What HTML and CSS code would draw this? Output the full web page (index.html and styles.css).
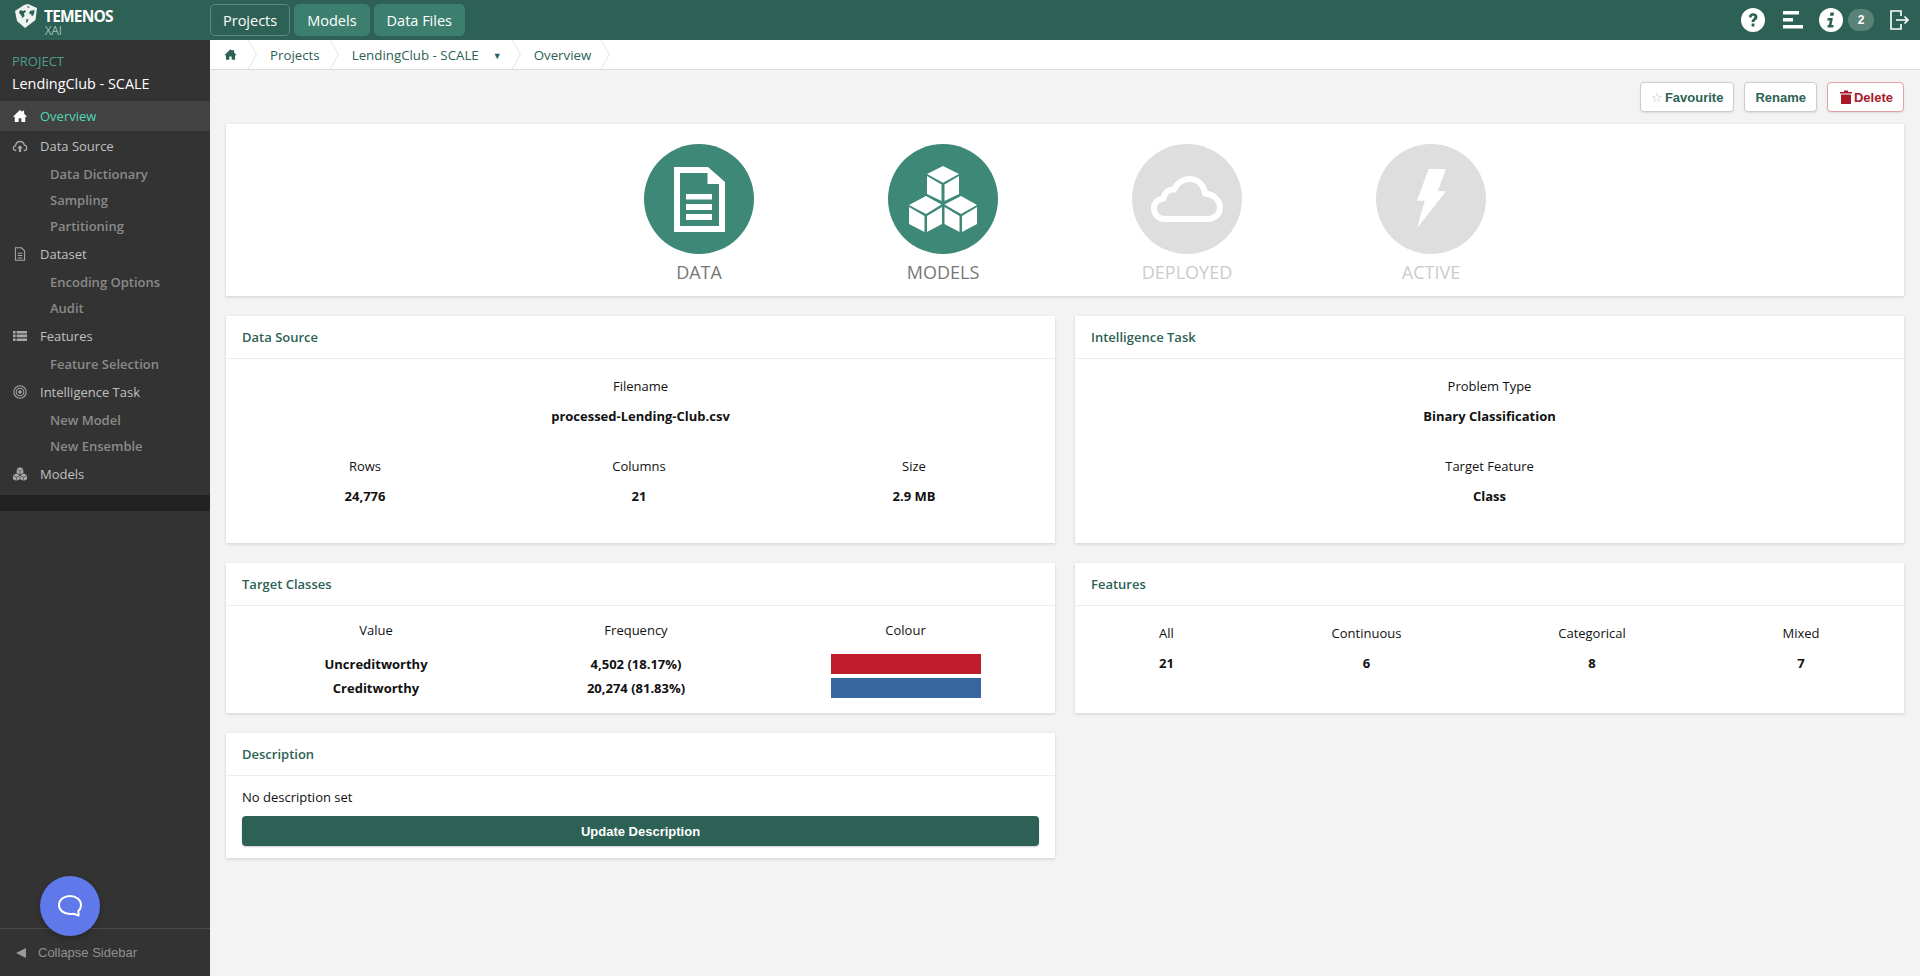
FILE: index.html
```html
<!DOCTYPE html>
<html lang="en">
<head>
<meta charset="utf-8">
<title>Temenos XAI - Overview</title>
<link rel="stylesheet" href="styles.css">
</head>
<body>
<svg class="defs" width="0" height="0" aria-hidden="true">
  <defs>
    <path id="home" d="M10 2 L13 4.800 V3 H15.500 V7 L19.500 11 H17 V18 H11.800 V13 H8.200 V18 H3 V11 H.5 Z"/>
  </defs>
</svg>
<header class="topbar">
  <div class="logo">
    <svg class="logo-cube" viewBox="0 0 23 24" width="23" height="24"><path fill="#eef3f1" d="M1 7 L10 1 L14 0 L23 4 L21.500 16 L11 24 L3 17 Z"/><path fill="#2d6155" d="M6 6 L9 7 L11 6 L12 8 L10 9 L10.500 12 L8.500 14 L7 11 L5 9 Z M16 7 L20.500 6 L20 10 L18 12.500 L17 10 L15 9.500 Z M12.500 15 L14.500 15.500 L13 19 L12 18 Z M13 2 L16 3 L14 4 Z"/></svg>
    <div class="logo-text"><span class="logo-name">TEMENOS</span><span class="logo-sub">XAI</span></div>
  </div>
  <nav class="topnav">
    <a class="topnav-item is-active">Projects</a>
    <a class="topnav-item">Models</a>
    <a class="topnav-item">Data Files</a>
  </nav>
  <div class="top-icons">
    <svg class="ti-help" viewBox="0 0 24 24" width="24" height="24"><circle cx="12" cy="12" r="12" fill="#fff"/><path d="M7.800 9.200 C8 6.600 9.800 5.200 12.200 5.200 C14.700 5.200 16.500 6.800 16.500 8.900 C16.500 11.900 13.400 11.900 13.400 14 H10.600 C10.600 10.900 13.400 10.900 13.400 9.100 C13.400 8.300 12.900 7.800 12.100 7.800 C11.200 7.800 10.700 8.400 10.600 9.600 Z M10.600 15.600 H13.400 V18.600 H10.600 Z" fill="#2d6155"/></svg>
    <svg class="ti-bars" viewBox="0 0 20 18" width="20" height="18"><path fill="#fff" d="M0 0 H16 V3.500 H0 Z M0 7 H10 V10.500 H0 Z M0 14 H20 V17.500 H0 Z"/></svg>
    <svg class="ti-info" viewBox="0 0 24 24" width="24" height="24"><circle cx="12" cy="12" r="12" fill="#fff"/><path d="M11.400 4.400 H15 L14.500 7.700 H11 Z M8.700 10 H13.900 L12.500 17 H14.600 L14.200 19.400 H8.400 L8.800 17 H9.900 L10.800 12.400 H8.300 Z" fill="#2d6155"/></svg>
    <span class="badge">2</span>
    <svg class="ti-exit" viewBox="0 0 20 20" width="20" height="20"><path fill="none" stroke="#fff" stroke-width="1.600" d="M11 6 V1 H1 V19 H11 V14"/><path fill="none" stroke="#fff" stroke-width="1.600" d="M6 10 H18 M14.500 6.500 L18 10 L14.500 13.500"/></svg>
  </div>
</header>
<div class="layout">
  <aside class="sidebar">
    <div class="project">
      <div class="project-label">PROJECT</div>
      <div class="project-name">LendingClub - SCALE</div>
    </div>
    <ul class="menu">
      <li class="menu-item is-active"><svg class="mi" viewBox="0 0 20 20" width="15" height="15"><use href="#home" fill="#fff"/></svg>Overview</li>
      <li class="menu-item"><svg class="mi" viewBox="0 0 20 16" width="15" height="12"><path fill="none" stroke="#a8a8a8" stroke-width="1.700" d="M5 14 H4.500 C2.500 14 1 12.600 1 10.800 C1 9 2.300 7.800 4 7.800 C4.500 4.400 7 2 10 2 C13 2 15.200 4 15.700 6.800 C17.700 7 19 8.600 19 10.500 C19 12.500 17.600 14 15.500 14 H15"/><path fill="#a8a8a8" d="M10 7 L14 11 H11.500 V16 H8.500 V11 H6 Z"/></svg>Data Source</li>
      <li class="sub-item">Data Dictionary</li>
      <li class="sub-item">Sampling</li>
      <li class="sub-item">Partitioning</li>
      <li class="menu-item"><svg class="mi" viewBox="0 0 14 18" width="11" height="14"><path fill="none" stroke="#a8a8a8" stroke-width="1.500" d="M1 1 H9 L13 5 V17 H1 Z"/><path stroke="#a8a8a8" stroke-width="1.300" d="M4 8 H10 M4 11 H10 M4 14 H10"/></svg>Dataset</li>
      <li class="sub-item">Encoding Options</li>
      <li class="sub-item">Audit</li>
      <li class="menu-item"><svg class="mi" viewBox="0 0 14 10" width="14" height="10"><path fill="#a8a8a8" d="M0 0 H2.600 V2.400 H0 Z M3.600 0 H14 V2.400 H3.600 Z M0 3.600 H2.600 V6.200 H0 Z M3.600 3.600 H14 V6.200 H3.600 Z M0 7.400 H2.600 V10 H0 Z M3.600 7.400 H14 V10 H3.600 Z"/></svg>Features</li>
      <li class="sub-item">Feature Selection</li>
      <li class="menu-item"><svg class="mi" viewBox="0 0 14 14" width="14" height="14"><g fill="none" stroke="#a8a8a8"><circle cx="7" cy="7" r="6.200" stroke-width="1.100"/><circle cx="7" cy="7" r="3.800" stroke-width="1.100"/></g><circle cx="7" cy="7" r="1.800" fill="#a8a8a8"/></svg>Intelligence Task</li>
      <li class="sub-item">New Model</li>
      <li class="sub-item">New Ensemble</li>
      <li class="menu-item"><svg class="mi" viewBox="0 0 68 66" width="14" height="14"><g fill="#a8a8a8"><path d="M34 0 L50 8 L34 16.700 L18 8 Z M18 10 L32.500 18.500 V35 L18 28 Z M50 10 L35.500 18.500 V35 L50 28 Z"/><path d="M17 30 L32.500 38.500 L17 48 L0 39 Z M0 41 L15.500 50 V66 L0 58 Z M33 41 L18 50 V66 L33 58 Z"/><path d="M52 30 L68 39 L52 48 L35.500 38.500 Z M35.500 41 L50.500 50 V66 L35.500 58 Z M68 41 L53 50 V66 L68 58 Z"/></g></svg>Models</li>
    </ul>
    <div class="menu-end"></div>
    <div class="sidebar-fill"></div>
    <div class="collapse"><span class="collapse-arrow"></span>Collapse Sidebar</div>
    <div class="chat"><svg viewBox="0 0 26 24" width="26" height="24"><path fill="none" stroke="#fff" stroke-width="2" stroke-linejoin="round" d="M13 2 C19 2 24 5.500 24 11 C24 13.500 23 15.500 21.400 17 L21.600 21.600 L16.600 19.700 C15.400 20 14.200 20 13 20 C6.500 20 2 16 2 11 C2 5.700 7 2 13 2 Z"/></svg></div>
  </aside>
  <main class="main">
    <nav class="crumbs">
      <span class="crumb crumb-home"><svg viewBox="0 0 20 20" width="13" height="13"><use href="#home" fill="#2d6155"/></svg></span>
      <span class="crumb">Projects</span>
      <span class="crumb">LendingClub - SCALE<span class="crumb-caret">▼</span></span>
      <span class="crumb">Overview</span>
    </nav>
    <div class="content">
      <div class="actions">
        <button class="btn"><span class="star">☆</span>Favourite</button>
        <button class="btn">Rename</button>
        <button class="btn btn-danger"><svg viewBox="0 0 12 14" width="12" height="14"><path fill="#a8192a" d="M0 2 H4 V.5 H8 V2 H12 V3.500 H0 Z M1 4.500 H11 V14 H1 Z"/></svg>Delete</button>
      </div>
      <section class="card status">
        <div class="status-item">
          <div class="disc disc-on"><svg viewBox="0 0 51 65" width="51" height="65"><path fill="#fff" fill-rule="evenodd" d="M0 0 H34 L51 15 V65 H0 Z M6 6 V59 H45 V17 H33.500 V6 Z M12 27 H38 V32.500 H12 Z M12 37 H38 V43 H12 Z M12 47 H38 V53 H12 Z"/></svg></div>
          <div class="status-label">DATA</div>
        </div>
        <div class="status-item">
          <div class="disc disc-on"><svg viewBox="0 0 68 66" width="68" height="66"><g fill="#fff"><path d="M34 0 L50 8 L34 16.700 L18 8 Z M18 10 L32.500 18.500 V35 L18 28 Z M50 10 L35.500 18.500 V35 L50 28 Z"/><path d="M17 30 L32.500 38.500 L17 48 L0 39 Z M0 41 L15.500 50 V66 L0 58 Z M33 41 L18 50 V66 L33 58 Z"/><path d="M52 30 L68 39 L52 48 L35.500 38.500 Z M35.500 41 L50.500 50 V66 L35.500 58 Z M68 41 L53 50 V66 L68 58 Z"/></g></svg></div>
          <div class="status-label">MODELS</div>
        </div>
        <div class="status-item">
          <div class="disc disc-off"><svg viewBox="0 0 72 46" width="72" height="46"><path fill="none" stroke="#fff" stroke-width="6" stroke-linejoin="round" d="M14 43 C7 43 3 38 3 32.500 C3 27 7 23 12.500 22.500 C13.500 16 18 13 23 13.500 C27 5.500 33 3 38.500 3 C47 3 53 9 54 17.500 C62 18 69 24 69 31.500 C69 38 64 43 57 43 Z"/></svg></div>
          <div class="status-label is-off">DEPLOYED</div>
        </div>
        <div class="status-item">
          <div class="disc disc-off"><svg viewBox="0 0 29 60" width="29" height="60"><path fill="#fff" d="M11.700 0 H29 L20.700 22.300 H29 L0 59.300 L7.700 31.700 H0 Z"/></svg></div>
          <div class="status-label is-off">ACTIVE</div>
        </div>
      </section>
      <div class="grid">
        <section class="card">
          <h2 class="card-title">Data Source</h2>
          <div class="card-body ds-body">
            <div class="field"><div class="f-label">Filename</div><div class="f-value">processed-Lending-Club.csv</div></div>
            <div class="triple">
              <div class="field"><div class="f-label">Rows</div><div class="f-value">24,776</div></div>
              <div class="field"><div class="f-label">Columns</div><div class="f-value">21</div></div>
              <div class="field"><div class="f-label">Size</div><div class="f-value">2.9 MB</div></div>
            </div>
          </div>
        </section>
        <section class="card">
          <h2 class="card-title">Intelligence Task</h2>
          <div class="card-body ds-body">
            <div class="field"><div class="f-label">Problem Type</div><div class="f-value">Binary Classification</div></div>
            <div class="field second"><div class="f-label">Target Feature</div><div class="f-value">Class</div></div>
          </div>
        </section>
        <section class="card">
          <h2 class="card-title">Target Classes</h2>
          <div class="card-body tc-body">
            <table class="tbl tc">
              <thead><tr><th>Value</th><th>Frequency</th><th>Colour</th></tr></thead>
              <tbody>
                <tr><td>Uncreditworthy</td><td>4,502 (18.17%)</td><td><div class="swatch swatch-red"></div></td></tr>
                <tr><td>Creditworthy</td><td>20,274 (81.83%)</td><td><div class="swatch swatch-blue"></div></td></tr>
              </tbody>
            </table>
          </div>
        </section>
        <section class="card">
          <h2 class="card-title">Features</h2>
          <div class="fe-body">
            <div class="field"><div class="f-label">All</div><div class="f-value">21</div></div>
            <div class="field"><div class="f-label">Continuous</div><div class="f-value">6</div></div>
            <div class="field"><div class="f-label">Categorical</div><div class="f-value">8</div></div>
            <div class="field"><div class="f-label">Mixed</div><div class="f-value">7</div></div>
          </div>
        </section>
        <section class="card">
          <h2 class="card-title">Description</h2>
          <div class="card-body de-body">
            <p class="de-text">No description set</p>
            <button class="btn-primary">Update Description</button>
          </div>
        </section>
      </div>
    </div>
  </main>
</div>
</body>
</html>
```
FILE: styles.css
```css
* { box-sizing: border-box; }
html, body { margin: 0; height: 100%; }
body { font-family: "Open Sans", sans-serif; font-size: 13px; color: #111; background: #f3f3f3; overflow: hidden; display: flex; flex-direction: column; }
.defs { position: absolute; }

.topbar { height: 40px; flex: none; background: #2d6155; display: flex; align-items: center; color: #fff; }
.logo { width: 210px; flex: none; height: 40px; display: flex; align-items: flex-start; padding: 4px 0 0 14px; }
.logo-cube { flex: none; margin-right: 7px; }
.logo-text { display: flex; flex-direction: column; }
.logo-name { font-size: 15.5px; font-weight: 700; line-height: 16px; letter-spacing: -.8px; margin-top: 4px; }
.logo-sub { font-size: 12px; line-height: 14px; font-weight: 300; margin-left: 1px; color: #d5e2de; }
.topnav { display: flex; gap: 4px; }
.topnav-item { height: 32px; padding: 0 12px; border: 1px solid #3d7f6f; border-radius: 5px; background: #3d7f6f; font-size: 14.5px; line-height: 31px; color: #fff; }
.topnav-item.is-active { background: #2d6155; border-color: #5b8b7f; }
.top-icons { margin-left: auto; display: flex; align-items: center; padding-right: 10px; }
.ti-bars { margin-left: 18px; }
.ti-info { margin-left: 16px; }
.badge { margin-left: 5px; width: 26px; height: 22px; border-radius: 11px; background: #5b8277; font: 700 12px/22px "Liberation Sans", sans-serif; text-align: center; color: #fff; }
.ti-exit { margin-left: 16px; }

.layout { flex: 1; display: flex; min-height: 0; }
.sidebar { position: relative; width: 210px; flex: none; background: #333; display: flex; flex-direction: column; }
.project { height: 61px; padding: 13px 0 0 12px; }
.project-label { font-size: 13px; line-height: 16px; font-weight: 500; color: #4a9f8a; }
.project-name { font-size: 14.4px; line-height: 20px; margin-top: 5px; color: #fff; }
.menu { list-style: none; margin: 0; padding: 0; color: #bbb; }
.menu-item { height: 30px; display: flex; align-items: center; padding-left: 40px; position: relative; font-size: 13px; color: #c0c0c0; }
.menu-item.is-active { background: #424242; color: #4fd8b5; }
.mi { position: absolute; left: 20px; top: 50%; transform: translate(-50%, -50%); }
.sub-item { height: 26px; line-height: 26px; padding-left: 50px; font-size: 13px; font-weight: 600; color: #8a8a8a; }
.menu-end { height: 16px; background: #222; margin-top: 6px; }
.sidebar-fill { flex: 1; }
.collapse { height: 48px; border-top: 1px solid #4a4a4a; display: flex; align-items: center; padding-left: 16px; font: 13px "Liberation Sans", sans-serif; color: #8f8f8f; }
.collapse-arrow { width: 0; height: 0; border: 5px solid transparent; border-right: 10px solid #9a9a9a; border-left: 0; margin-right: 12px; }
.chat { position: absolute; left: 40px; top: 836px; width: 60px; height: 60px; border-radius: 50%; background: #5f78ea; display: flex; align-items: center; justify-content: center; box-shadow: 0 2px 6px rgba(0,0,0,.25); }

.main { flex: 1; min-width: 0; display: flex; flex-direction: column; }
.crumbs { height: 30px; flex: none; background: #fff; border-bottom: 1px solid #ddd; display: flex; align-items: center; color: #2d6155; font-size: 13.3px; font-weight: 500; }
.crumb { position: relative; height: 29px; line-height: 31px; padding: 0 19px 0 13px; }
.crumb::after { content: ""; position: absolute; right: -2px; top: 4px; width: 20px; height: 20px; border-top: 1px solid #ddd; border-right: 1px solid #ddd; transform: scaleX(.55) rotate(45deg); }
.crumb-home { padding: 0 20px 0 14px; display: flex; align-items: center; }
.crumb-caret { font-size: 9px; margin-left: 14px; vertical-align: 1px; }

.content { flex: 1; padding: 12px 16px 0; }
.actions { display: flex; justify-content: flex-end; gap: 10px; height: 30px; }
.btn { height: 30px; padding: 0 10px; background: #fff; border: 1px solid #ccc; border-radius: 4px; font: 700 13px "Liberation Sans", sans-serif; color: #2d6155; box-shadow: 0 1px 2px rgba(0,0,0,.1); display: flex; align-items: center; }
.star { font-size: 12.5px; font-weight: 400; color: #bbb; margin-right: 2px; }
.btn-danger { color: #a8192a; border-color: #e0a0a6; padding-left: 12px; }
.btn-danger svg { margin-right: 2px; }
.card { background: #fff; box-shadow: 0 1px 3px rgba(0,0,0,.15); min-width: 0; }
.status { margin-top: 12px; height: 172px; display: flex; justify-content: center; padding-top: 20px; }
.status-item { width: 244px; display: flex; flex-direction: column; align-items: center; }
.disc { width: 110px; height: 110px; border-radius: 50%; display: flex; align-items: center; justify-content: center; }
.disc-on { background: #3d8876; }
.disc-off { background: #dedede; }
.status-label { font-size: 18px; font-weight: 500; line-height: 24px; margin-top: 6px; color: #777; }
.status-label.is-off { color: #ccc; }

.grid { display: grid; grid-template-columns: repeat(2, minmax(0, 1fr)); gap: 20px; margin-top: 20px; grid-template-rows: 227px 150px 125px; }
.card-title { margin: 0; height: 43px; padding: 0 16px; font-size: 13px; font-weight: 600; line-height: 42px; color: #2d6155; border-bottom: 1px solid #eee; }
.card-body { padding: 0 16px; }
.ds-body { padding-top: 17px; }
.field { text-align: center; }
.f-label { line-height: 20px; }
.f-value { line-height: 20px; margin-top: 10px; font-weight: 700; }
.triple { display: grid; grid-template-columns: 274px 274px 276px; margin: 30px -13px 0 -14px; }
.second { margin-top: 30px; }
.tc-body { padding-top: 14px; }
.tbl { width: 100%; border-collapse: collapse; table-layout: fixed; }
.tbl th { font-weight: 400; padding: 0 0 12px; line-height: 20px; }
.tbl td { height: 24px; padding: 0; text-align: center; font-weight: 700; line-height: 20px; }
.tc th:nth-child(1) { width: 268px; }
.tc th:nth-child(2) { width: 252px; }
.tc th:nth-child(3), .tc td:nth-child(3) { padding-left: 10px; }
.swatch { width: 150px; height: 20px; margin: 0 auto; }
.swatch-red { background: #bf1d2d; }
.swatch-blue { background: #36679f; }
.fe-body { padding: 17px 0 0; display: grid; grid-template-columns: 183px 217px 234px 184px; }
.de-body { padding-top: 11px; }
.de-text { margin: 0; line-height: 20px; }
.btn-primary { display: block; width: 100%; height: 30px; margin-top: 9px; border: 0; border-radius: 4px; background: #2d6155; color: #fff; font: 700 13px "Liberation Sans", sans-serif; box-shadow: 0 1px 2px rgba(0,0,0,.2); }
```
